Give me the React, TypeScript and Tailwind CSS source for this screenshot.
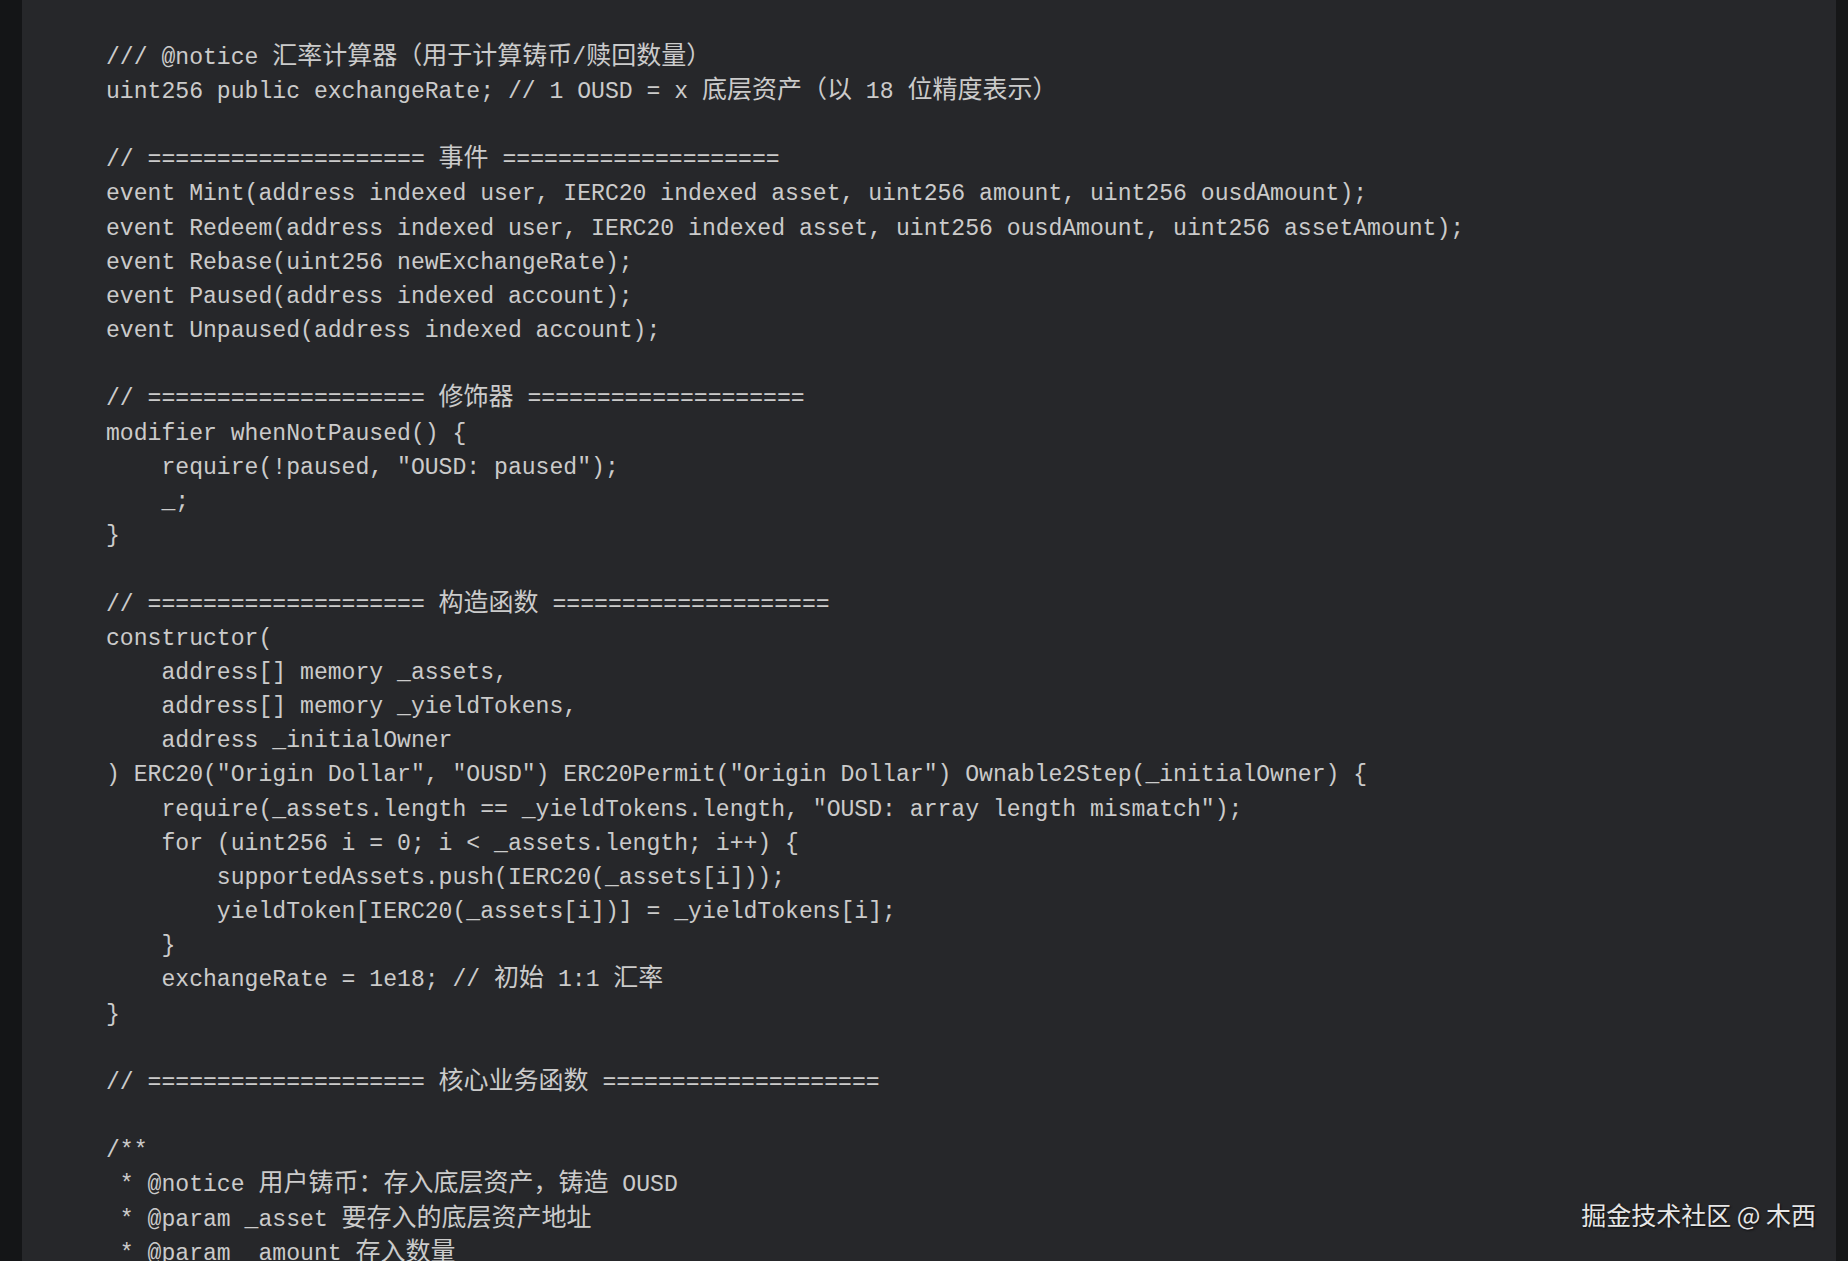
const lines = [
  'bool public paused;',
  '',
  '/// @notice 汇率计算器（用于计算铸币/赎回数量）',
  'uint256 public exchangeRate; // 1 OUSD = x 底层资产（以 18 位精度表示）',
  '',
  '// ==================== 事件 ====================',
  'event Mint(address indexed user, IERC20 indexed asset, uint256 amount, uint256 ousdAmount);',
  'event Redeem(address indexed user, IERC20 indexed asset, uint256 ousdAmount, uint256 assetAmount);',
  'event Rebase(uint256 newExchangeRate);',
  'event Paused(address indexed account);',
  'event Unpaused(address indexed account);',
  '',
  '// ==================== 修饰器 ====================',
  'modifier whenNotPaused() {',
  '    require(!paused, "OUSD: paused");',
  '    _;',
  '}',
  '',
  '// ==================== 构造函数 ====================',
  'constructor(',
  '    address[] memory _assets,',
  '    address[] memory _yieldTokens,',
  '    address _initialOwner',
  ') ERC20("Origin Dollar", "OUSD") ERC20Permit("Origin Dollar") Ownable2Step(_initialOwner) {',
  '    require(_assets.length == _yieldTokens.length, "OUSD: array length mismatch");',
  '    for (uint256 i = 0; i < _assets.length; i++) {',
  '        supportedAssets.push(IERC20(_assets[i]));',
  '        yieldToken[IERC20(_assets[i])] = _yieldTokens[i];',
  '    }',
  '    exchangeRate = 1e18; // 初始 1:1 汇率',
  '}',
  '',
  '// ==================== 核心业务函数 ====================',
  '',
  '/**',
  ' * @notice 用户铸币：存入底层资产，铸造 OUSD',
  ' * @param _asset 要存入的底层资产地址',
  ' * @param _amount 存入数量',
  ' * @return 铸造的 OUSD 数量',
]

// split a line into ascii / cjk runs so the wide glyphs get their own size
function CodeLine({ text }: { text: string }) {
  const parts = text.split(/([\u3000-\u303f\u4e00-\u9fff\uff00-\uffef]+)/)
  return (
    <div className="h-[34.18px] leading-[34.18px] whitespace-pre">
      {parts.map((part, i) =>
        i % 2 === 1 ? (
          <span key={i} className="text-[25px] leading-[20px] font-['Noto_Sans_CJK_SC',sans-serif]">
            {part}
          </span>
        ) : (
          <span key={i}>{part}</span>
        ),
      )}
      {text === '' ? ' ' : null}
    </div>
  )
}

export default function App() {
  return (
    <div className="relative flex h-[1261px] w-full overflow-hidden bg-[#141517]">
      <div className="w-[22px] shrink-0 bg-[#141517]" />

      <main className="flex-1 overflow-hidden bg-[#26272a] pl-[84px]">
        <div className="-mt-[27.6px] font-['Liberation_Mono','Noto_Sans_CJK_SC',monospace] text-[23.1px] text-[#cbcbcb]">
          {lines.map((line, index) => (
            <CodeLine key={index} text={line} />
          ))}
        </div>
      </main>

      <div className="w-[12px] shrink-0 bg-[#161718]" />

      <div className="absolute top-[1199px] right-[32px] font-['Noto_Sans_CJK_SC','Noto_Sans',sans-serif] text-[25px] leading-[30px] text-[#e6e6e6] [text-shadow:1px_1px_2px_rgba(0,0,0,0.7)]">
        掘金技术社区 @ 木西
      </div>
    </div>
  )
}
